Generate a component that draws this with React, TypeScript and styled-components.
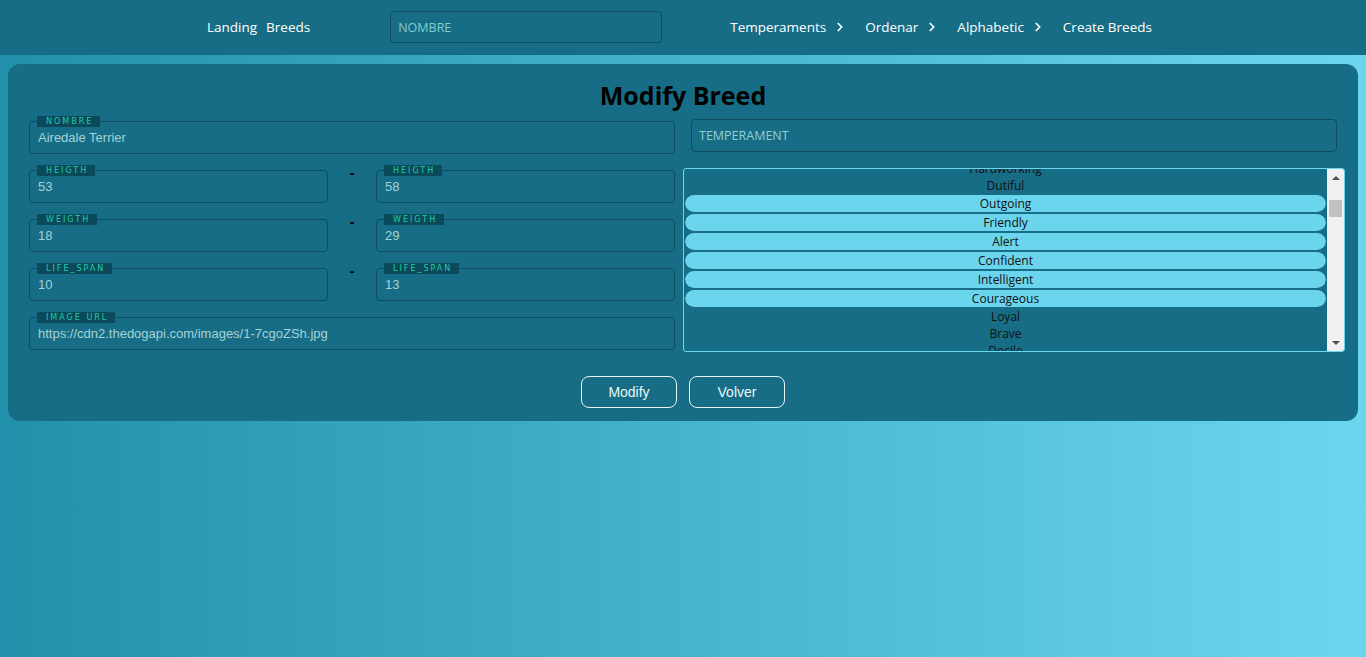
import React, { useLayoutEffect, useRef } from "react";
import styled, { createGlobalStyle } from "styled-components";
import { ChevronRight } from "lucide-react";

const GlobalStyle = createGlobalStyle`
  html { min-height: 100%; }
  body {
    margin: 0;
    min-height: 100vh;
    background: linear-gradient(to right, #2190aa, #6cd6ee);
    font-family: "Open Sans", "Noto Sans", sans-serif;
  }
  * { box-sizing: border-box; }
`;

const Header = styled.header`
  height: 55px;
  background: #176d85;
  display: flex;
  align-items: center;
  padding-left: 207px;
  padding-bottom: 1px;
`;

const NavText = styled.span`
  font-family: "Open Sans", sans-serif;
  font-weight: 500;
  font-size: 13.5px;
  color: #ffffff;
  white-space: nowrap;
`;

const LeftLinks = styled.div`
  display: flex;
  gap: 9px;
`;

const Search = styled.input`
  margin-left: 80px;
  width: 272px;
  height: 32px;
  background: transparent;
  border: 1px solid #0d4f61;
  border-radius: 4px;
  padding: 0 7px;
  font-family: "Open Sans", sans-serif;
  font-size: 12.5px;
  color: #9fd6d8;
  outline: none;
  &::placeholder { color: #86cccf; }
`;

const RightLinks = styled.div`
  margin-left: 68px;
  display: flex;
  align-items: center;
  gap: 18px;
`;

const NavItem = styled.div`
  display: flex;
  align-items: center;
  gap: 7px;
  color: #fff;
`;

const Panel = styled.main`
  margin: 9px 8px 0;
  background: #176d85;
  border-radius: 12px;
  padding: 14px 13px 13px 21px;
`;

const Title = styled.h1`
  margin: 0 0 4px -8px;
  font-family: "Open Sans", sans-serif;
  font-weight: 700;
  font-size: 25px;
  line-height: 34px;
  text-align: center;
  color: #000;
`;

const FormGrid = styled.div`
  display: grid;
  grid-template-columns: 646px 662px;
  column-gap: 8px;
  align-items: start;
`;

const LeftCol = styled.div`
  display: flex;
  flex-direction: column;
  gap: 11px;
`;

const PairRow = styled.div`
  display: grid;
  grid-template-columns: 1fr 48px 1fr;
  align-items: start;
`;

const Dash = styled.span`
  text-align: center;
  font-family: "Liberation Sans", Arial, sans-serif;
  font-weight: 700;
  font-size: 14px;
  line-height: 16px;
  color: #000;
`;

const Field = styled.fieldset`
  margin: 0;
  min-width: 0;
  padding: 0 7px 6px;
  border: 1px solid #0c4d5e;
  border-radius: 4px;
`;

const Legend = styled.legend`
  margin: 0;
  padding: 0 7px 0 9px;
  background: #0b4a5a;
  color: #20cca6;
  font-family: "DejaVu Sans", sans-serif;
  font-size: 8px;
  line-height: 11px;
  letter-spacing: 2px;
  text-transform: uppercase;
`;

const FieldInput = styled.input`
  display: block;
  width: 100%;
  height: 20px;
  padding: 0 1px;
  border: none;
  background: transparent;
  outline: none;
  font-family: "Liberation Sans", Arial, sans-serif;
  font-size: 13px;
  color: #a3d3d7;
`;

const RightCol = styled.div`
  display: flex;
  flex-direction: column;
  gap: 16px;
  padding-top: 3px;
`;

const TempInput = styled.input`
  margin: 0 8px;
  height: 33px;
  background: transparent;
  border: 1px solid #0c4d5e;
  border-radius: 4px;
  padding: 0 7px;
  font-family: "Open Sans", sans-serif;
  font-size: 12.5px;
  outline: none;
  &::placeholder { color: #8fd0d3; }
`;

const ListFrame = styled.div`
  height: 184px;
  border: 1px solid #6cd6ee;
  border-radius: 3px;
  display: flex;
  overflow: hidden;
`;

const ListScroll = styled.div`
  flex: 1;
  min-width: 0;
  overflow: hidden;
  padding: 0 1px;
`;

const ScrollTrack = styled.div`
  width: 17px;
  flex: none;
  background: #f1f1f1;
  display: flex;
  flex-direction: column;
  align-items: center;
`;

const ArrowButton = styled.div<{ $dir: "up" | "down" }>`
  height: 17px;
  width: 100%;
  flex: none;
  display: flex;
  align-items: center;
  justify-content: center;
  &::before {
    content: "";
    border-left: 4px solid transparent;
    border-right: 4px solid transparent;
    ${(p) =>
      p.$dir === "up"
        ? "border-bottom: 4px solid #505050;"
        : "border-top: 4px solid #505050;"}
  }
`;

const Thumb = styled.div`
  width: 13px;
  height: 17px;
  flex: none;
  background: #c1c1c1;
`;

const TrackSpace = styled.div`
  flex: 1;
`;

const Option = styled.div<{ $selected: boolean }>`
  height: ${(p) => (p.$selected ? "19px" : "17px")};
  line-height: 17px;
  border-style: solid;
  border-color: transparent;
  border-width: ${(p) => (p.$selected ? "1px 0" : "0")};
  background-clip: padding-box;
  border-radius: 10px;
  background-color: ${(p) => (p.$selected ? "#6bd5ed" : "transparent")};
  text-align: center;
  font-family: "Open Sans", "Noto Sans", sans-serif;
  font-size: 12px;
  color: #111;
  white-space: nowrap;
`;

const Buttons = styled.div`
  display: flex;
  justify-content: center;
  gap: 12px;
  margin: 24px 0 0 -8px;
`;

const Button = styled.button`
  width: 96px;
  height: 32px;
  background: transparent;
  border: 1px solid #e6f4f8;
  border-radius: 8px;
  font-family: "Liberation Sans", Arial, sans-serif;
  font-size: 14px;
  color: #eaf6fa;
  cursor: pointer;
`;

const temperaments = [
  "Stubborn", "Curious", "Playful", "Adventurous", "Active", "Fun-loving",
  "Aloof", "Clownish", "Dignified", "Independent", "Happy", "Wild",
  "Hardworking", "Dutiful", "Outgoing", "Friendly", "Alert", "Confident",
  "Intelligent", "Courageous", "Loyal", "Brave", "Docile", "Responsive",
  "Composed", "Receptive", "Faithful", "Affectionate", "Devoted", "Assertive",
  "Energetic", "Gentle", "Dominant", "Strong Willed", "Obedient", "Reserved",
  "Protective", "Kind", "Sweet-Tempered", "Loving", "Tenacious", "Attentive",
  "Steady", "Bold", "Proud", "Reliable", "Fearless", "Lively", "Self-assured",
  "Cautious", "Eager", "Good-natured", "Spirited", "Companionable", "Even Tempered",
  "Rugged", "Fierce", "Refined", "Joyful", "Agile", "Amiable", "Excitable",
  "Determined", "Self-confident", "Hardy", "Calm", "Good-tempered", "Watchful",
  "Hard-working", "Feisty", "Cheerful", "Sensitive", "Easygoing", "Adaptable",
  "Trainable", "Lovable", "Territorial", "Keen", "Familial", "Rational",
  "Bossy", "Inquisitive", "Cat-like", "Merry", "Vocal", "Gay", "Sociable",
  "Quiet", "Clever", "Sturdy", "Patient", "Charming", "Mischievous",
];

const selected = new Set([
  "Outgoing", "Friendly", "Alert", "Confident", "Intelligent", "Courageous",
]);

const links = [
  { label: "Temperaments", chevron: true },
  { label: "Ordenar", chevron: true },
  { label: "Alphabetic", chevron: true },
  { label: "Create Breeds", chevron: false },
];

function LabeledField({ label, value }: { label: string; value: string }) {
  return (
    <Field>
      <Legend>{label}</Legend>
      <FieldInput defaultValue={value} />
    </Field>
  );
}

const pairs = [
  { label: "Heigth", min: "53", max: "58" },
  { label: "Weigth", min: "18", max: "29" },
  { label: "Life_span", min: "10", max: "13" },
];

const SCROLL_TOP = 213;

export default function App() {
  const listRef = useRef<HTMLDivElement>(null);
  useLayoutEffect(() => {
    if (listRef.current) listRef.current.scrollTop = SCROLL_TOP;
  }, []);

  return (
    <>
      <GlobalStyle />
      <Header>
        <LeftLinks>
          <NavText>Landing</NavText>
          <NavText>Breeds</NavText>
        </LeftLinks>
        <Search placeholder="NOMBRE" />
        <RightLinks>
          {links.map((l) => (
            <NavItem key={l.label}>
              <NavText>{l.label}</NavText>
              {l.chevron && <ChevronRight size={14} strokeWidth={3} />}
            </NavItem>
          ))}
        </RightLinks>
      </Header>
      <Panel>
        <Title>Modify Breed</Title>
        <FormGrid>
          <LeftCol>
            <LabeledField label="Nombre" value="Airedale Terrier" />
            {pairs.map((p) => (
              <PairRow key={p.label}>
                <LabeledField label={p.label} value={p.min} />
                <Dash>-</Dash>
                <LabeledField label={p.label} value={p.max} />
              </PairRow>
            ))}
            <LabeledField
              label="Image URL"
              value="https://cdn2.thedogapi.com/images/1-7cgoZSh.jpg"
            />
          </LeftCol>
          <RightCol>
            <TempInput placeholder="TEMPERAMENT" />
            <ListFrame>
              <ListScroll ref={listRef}>
                {temperaments.map((t) => (
                  <Option key={t} $selected={selected.has(t)}>
                    {t}
                  </Option>
                ))}
              </ListScroll>
              <ScrollTrack>
                <ArrowButton $dir="up" />
                <Thumb style={{ marginTop: 14 }} />
                <TrackSpace />
                <ArrowButton $dir="down" />
              </ScrollTrack>
            </ListFrame>
          </RightCol>
        </FormGrid>
        <Buttons>
          <Button>Modify</Button>
          <Button>Volver</Button>
        </Buttons>
      </Panel>
    </>
  );
}
